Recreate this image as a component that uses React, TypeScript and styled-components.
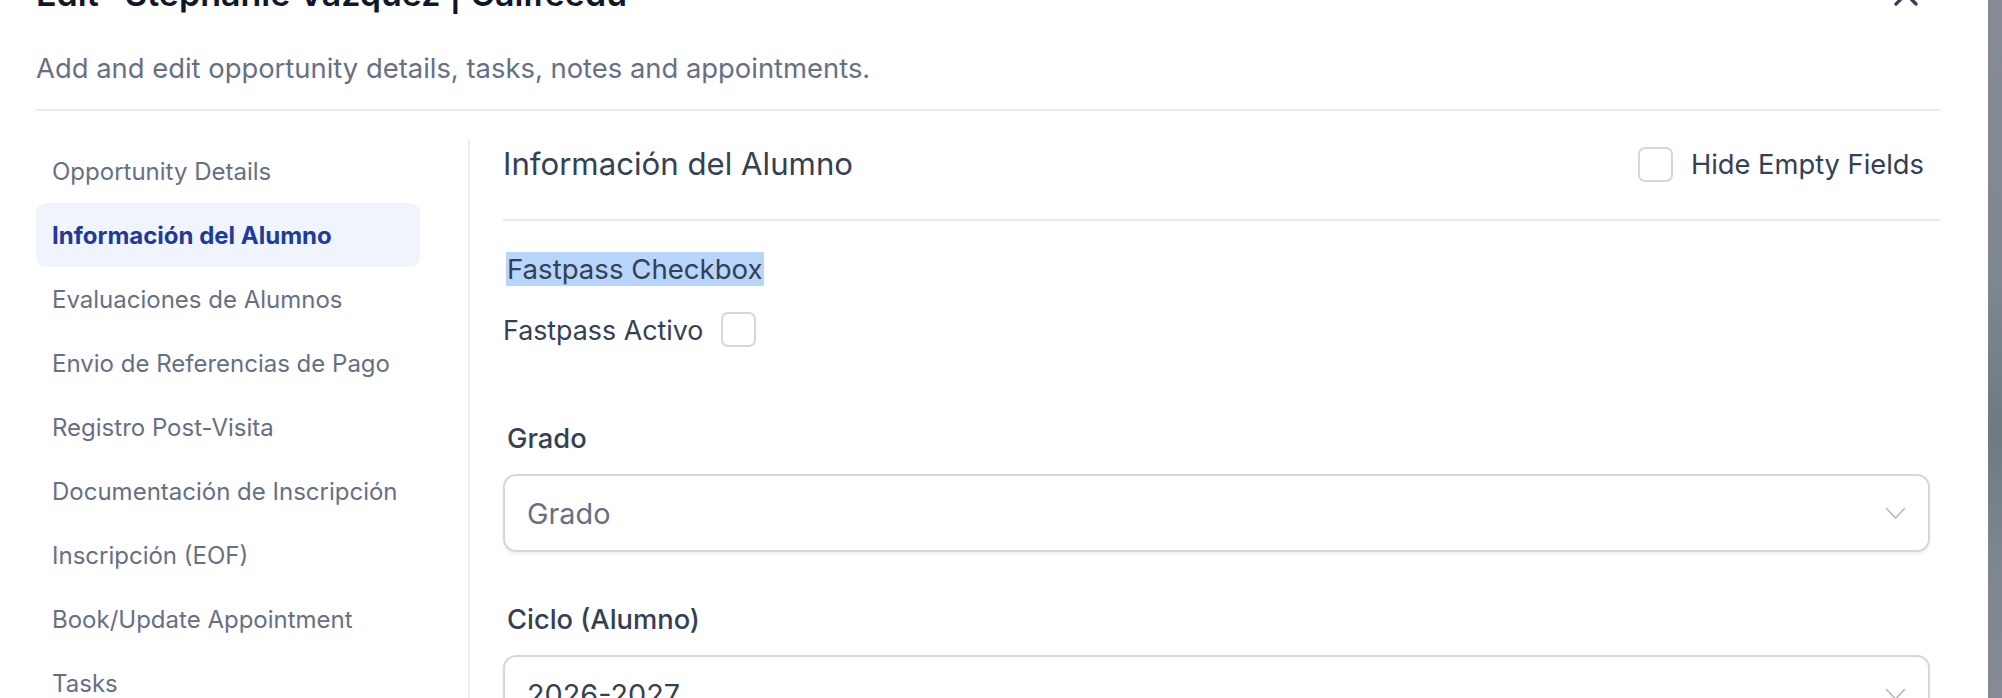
import React from "react";
import styled, { createGlobalStyle } from "styled-components";

const GlobalStyle = createGlobalStyle`
  html, body {
    margin: 0;
    padding: 0;
    background: #ffffff;
    font-family: Inter, "Noto Sans", "Liberation Sans", sans-serif;
    -webkit-font-smoothing: antialiased;
  }
  * { box-sizing: border-box; }
`;

const Page = styled.div`
  display: flex;
  height: 698px;
  overflow: hidden;
`;

const Modal = styled.div`
  flex: 1;
  background: #ffffff;
  padding: 0 48px 0 36px;
  display: flex;
  flex-direction: column;
  overflow: hidden;
`;

const Backdrop = styled.div`
  width: 14px;
  flex-shrink: 0;
  background: linear-gradient(180deg, #868b96 0%, #7f8790 40%, #6d7a80 62%, #7e8690 80%, #858a95 100%);
`;

const Header = styled.header`
  margin-top: -26px;
  display: flex;
  flex-direction: column;
  flex-shrink: 0;
`;

const TitleRow = styled.div`
  display: flex;
  align-items: center;
  justify-content: space-between;
`;

const Title = styled.h2`
  margin: 0;
  font-size: 34px;
  line-height: 40px;
  font-weight: 600;
  color: #101828;
  white-space: nowrap;
`;

const CloseButton = styled.button`
  border: 0;
  background: none;
  padding: 0;
  margin-right: 22px;
  width: 24px;
  height: 24px;
  display: flex;
  color: #344054;
  cursor: pointer;
`;

const Subtitle = styled.p`
  margin: 38px 0 0;
  font-size: 27.4px;
  line-height: 33px;
  color: #667085;
  white-space: nowrap;
`;

const Divider = styled.div`
  height: 2px;
  background: #e9eaef;
  margin-top: 24px;
  flex-shrink: 0;
`;

const Body = styled.div`
  display: flex;
  padding-top: 28px;
  flex: 1;
  min-height: 0;
`;

const Sidebar = styled.nav`
  width: 384px;
  flex-shrink: 0;
  display: flex;
  flex-direction: column;
`;

const NavItem = styled.div<{ $active?: boolean }>`
  height: 64px;
  flex-shrink: 0;
  display: flex;
  align-items: center;
  padding-left: 16px;
  border-radius: 10px;
  white-space: nowrap;
  font-size: 24px;
  font-weight: ${(p) => (p.$active ? 700 : 400)};
  color: ${(p) => (p.$active ? "#1e3a9e" : "#667085")};
  background: ${(p) => (p.$active ? "#eff4fd" : "transparent")};
`;

const Content = styled.section`
  flex: 1;
  margin-left: 48px;
  border-left: 2px solid #eceef2;
  padding-left: 33px;
  display: flex;
  flex-direction: column;
`;

const SectionHeader = styled.div`
  height: 50px;
  display: flex;
  align-items: center;
  justify-content: space-between;
  flex-shrink: 0;
`;

const SectionTitle = styled.h3`
  margin: 0;
  font-size: 31.2px;
  font-weight: 400;
  color: #344054;
  white-space: nowrap;
`;

const CheckLabel = styled.label`
  display: flex;
  align-items: center;
  gap: 18px;
  margin-right: 16px;
  font-size: 27.3px;
  color: #344054;
  white-space: nowrap;
`;

const Checkbox = styled.span`
  width: 35px;
  height: 35px;
  border: 2px solid #d3d7de;
  border-radius: 7px;
  background: #ffffff;
  flex-shrink: 0;
`;

const SectionDivider = styled.div`
  height: 2px;
  background: #e9eaef;
  margin-top: 30px;
  flex-shrink: 0;
`;

const GroupLabel = styled.div`
  margin: 31px 0 0 3px;
  font-size: 27.6px;
  line-height: 35px;
  color: #344054;
  white-space: nowrap;
`;

const Selected = styled.span`
  background: #b8d5fb;
  padding: 0 1px 0 1px;
`;

const InlineRow = styled.div`
  margin-top: 25px;
  height: 35px;
  display: flex;
  align-items: center;
  gap: 18px;
  font-size: 26.8px;
  color: #344054;
  white-space: nowrap;
`;

const Field = styled.div<{ $gap: number }>`
  margin-top: ${(p) => p.$gap}px;
  display: flex;
  flex-direction: column;
  gap: 18px;
  margin-right: 10px;
  flex-shrink: 0;
`;

const FieldLabel = styled.div`
  margin-left: 4px;
  font-size: 27.3px;
  line-height: 35px;
  font-weight: 500;
  color: #344054;
  white-space: nowrap;
`;

const Select = styled.div<{ $filled?: boolean }>`
  height: 78px;
  border: 2px solid #d3d7de;
  border-radius: 13px;
  box-shadow: 0 2px 3px rgba(16, 24, 40, 0.07);
  display: flex;
  align-items: center;
  justify-content: space-between;
  padding: 0 22px 0 22px;
  font-size: 28.8px;
  color: ${(p) => (p.$filled ? "#344054" : "#667085")};
  background: #ffffff;
`;

const Chevron = () => (
  <svg width="21" height="13" viewBox="0 0 21 13" fill="none">
    <polyline points="1.5,1.5 10.5,11 19.5,1.5" stroke="#b3b8c0" strokeWidth="1.6" strokeLinecap="round" strokeLinejoin="round" />
  </svg>
);

const XIcon = () => (
  <svg width="24" height="24" viewBox="0 0 24 24" fill="none">
    <path d="M2 2 L22 22 M22 2 L2 22" stroke="currentColor" strokeWidth="3.3" strokeLinecap="round" />
  </svg>
);

const navItems = [
  "Opportunity Details",
  "Información del Alumno",
  "Evaluaciones de Alumnos",
  "Envio de Referencias de Pago",
  "Registro Post-Visita",
  "Documentación de Inscripción",
  "Inscripción (EOF)",
  "Book/Update Appointment",
  "Tasks",
  "Notes",
  "Appointments",
];

export default function App() {
  return (
    <>
      <GlobalStyle />
      <Page>
        <Modal>
          <Header>
            <TitleRow>
              <Title>Edit "Stephanie Vazquez | Califeedu"</Title>
              <CloseButton aria-label="Close">
                <XIcon />
              </CloseButton>
            </TitleRow>
            <Subtitle>Add and edit opportunity details, tasks, notes and appointments.</Subtitle>
          </Header>
          <Divider />
          <Body>
            <Sidebar>
              {navItems.map((item) => (
                <NavItem key={item} $active={item === "Información del Alumno"}>
                  {item}
                </NavItem>
              ))}
            </Sidebar>
            <Content>
              <SectionHeader>
                <SectionTitle>Información del Alumno</SectionTitle>
                <CheckLabel>
                  <Checkbox />
                  Hide Empty Fields
                </CheckLabel>
              </SectionHeader>
              <SectionDivider />
              <GroupLabel>
                <Selected>Fastpass Checkbox</Selected>
              </GroupLabel>
              <InlineRow>
                Fastpass Activo
                <Checkbox />
              </InlineRow>
              <Field $gap={74}>
                <FieldLabel>Grado</FieldLabel>
                <Select>
                  Grado
                  <Chevron />
                </Select>
              </Field>
              <Field $gap={50}>
                <FieldLabel>Ciclo (Alumno)</FieldLabel>
                <Select $filled>
                  2026-2027
                  <Chevron />
                </Select>
              </Field>
            </Content>
          </Body>
        </Modal>
        <Backdrop />
      </Page>
    </>
  );
}
